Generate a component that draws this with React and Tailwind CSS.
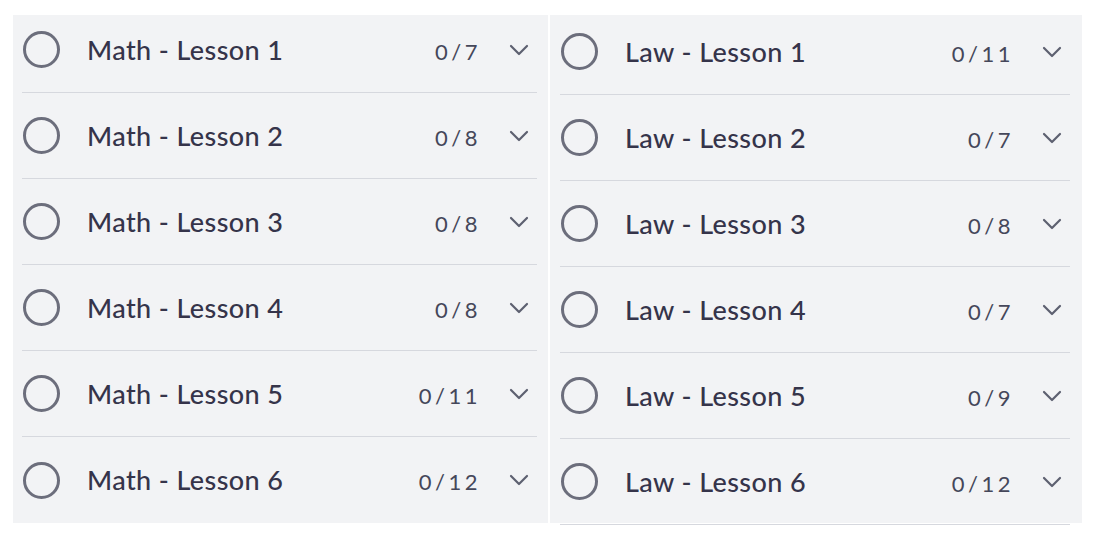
import React from "react";

const MATH = [
  { title: "Math - Lesson 1", done: 0, total: 7 },
  { title: "Math - Lesson 2", done: 0, total: 8 },
  { title: "Math - Lesson 3", done: 0, total: 8 },
  { title: "Math - Lesson 4", done: 0, total: 8 },
  { title: "Math - Lesson 5", done: 0, total: 11 },
  { title: "Math - Lesson 6", done: 0, total: 12 },
];

const LAW = [
  { title: "Law - Lesson 1", done: 0, total: 11 },
  { title: "Law - Lesson 2", done: 0, total: 7 },
  { title: "Law - Lesson 3", done: 0, total: 8 },
  { title: "Law - Lesson 4", done: 0, total: 7 },
  { title: "Law - Lesson 5", done: 0, total: 9 },
  { title: "Law - Lesson 6", done: 0, total: 12 },
];

function Chevron() {
  return (
    <svg width="20" height="12" viewBox="0 0 20 12" fill="none">
      <path d="M2 2l8 8 8-8" stroke="#5d6070" strokeWidth="2.2" strokeLinecap="round" strokeLinejoin="round" />
    </svg>
  );
}

function LessonRow({ lesson, first, last, side }) {
  const h = side === "left"
    ? first ? "h-[78px] pb-[8px]" : "h-[86px]"
    : first ? "h-[80px] pb-[6px]" : "h-[86px]";
  return (
    <div className={`flex items-center ${h} ${last && side === "left" ? "" : "border-b border-[#d6d8de]"}`}>
      <span className="ml-[1px] w-[37px] h-[37px] rounded-full border-[3px] border-[#6c6e7c] shrink-0" />
      <span className="ml-[27px] pt-[1px] text-[27px] font-medium text-[#35344a] tracking-[0.4px]">{lesson.title}</span>
      <span className="ml-auto pt-[3px] text-[22px] text-[#45475a] tracking-[3.5px]">
        {lesson.done}/{lesson.total}
      </span>
      <span className="ml-[28px] mr-[8px] flex items-center">
        <Chevron />
      </span>
    </div>
  );
}

export default function App() {
  return (
    <div className="bg-white w-[1094px] h-[535px] pt-[15px] pl-[13px] flex gap-[2px]" style={{ fontFamily: "Lato, 'Open Sans', sans-serif" }}>
      <div className="w-[535px] h-[508px] bg-[#f2f3f5] pl-[9px] pr-[11px]">
        {MATH.map((l, i) => (
          <LessonRow key={l.title} lesson={l} first={i === 0} last={i === MATH.length - 1} side="left" />
        ))}
      </div>
      <div className="w-[532px] h-[508px] bg-[#f2f3f5] pl-[10px] pr-[12px]">
        {LAW.map((l, i) => (
          <LessonRow key={l.title} lesson={l} first={i === 0} last={i === LAW.length - 1} side="right" />
        ))}
      </div>
    </div>
  );
}
